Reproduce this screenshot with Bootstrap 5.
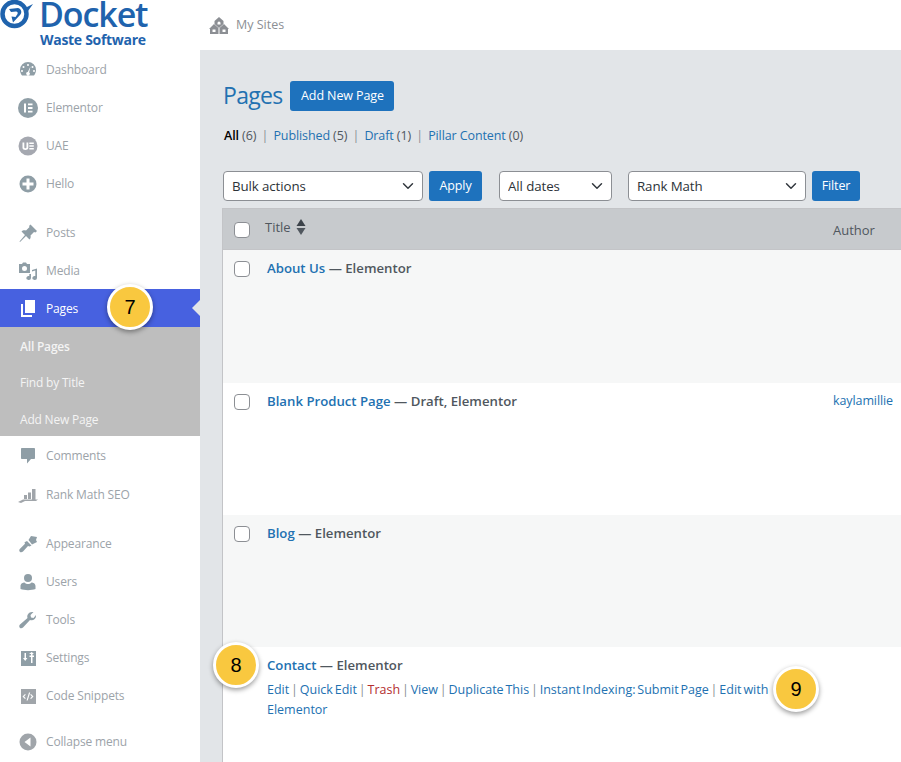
<!DOCTYPE html>
<html lang="en">
<head>
  <meta charset="UTF-8">
  <title>Pages</title>
  <link href="https://cdn.jsdelivr.net/npm/bootstrap@5.3.3/dist/css/bootstrap.min.css" rel="stylesheet">
  <style>
    html, body { height: 762px; overflow: hidden; }
    body { font-family: "Open Sans", "Noto Sans", sans-serif; font-size: 12.5px; background: #fff; color: #3c434a; }
    a { text-decoration: none; color: #2271b1; }
    .shell { width: 901px; height: 762px; position: relative; overflow: hidden; }
    .side { width: 200px; flex: none; }
    .brand { height: 51px; position: relative; overflow: hidden; }
    .brand svg { position: absolute; left: 0; top: 0; }
    .brand-a { position: absolute; left: 39px; top: 2px; font: 600 34px/24px "Open Sans", sans-serif; letter-spacing: -1.1px; color: #1f63ad; }
    .brand-b { position: absolute; left: 40px; top: 32px; font: 700 14px/16px "Open Sans", sans-serif; letter-spacing: -.3px; color: #1f63ad; }
    .side-item { display: flex; align-items: center; height: 38px; padding-left: 18px; color: #9ca3a9; font-size: 12px; letter-spacing: -.15px; }
    .side-item svg { width: 20px; height: 20px; flex: none; margin-right: 8px; }
    .side-gap { margin-top: 11px; }
    .side-gap-b { margin-top: 10px; }
    .side-now { background: #4761e0; color: #fff; position: relative; margin-top: -1px; padding-top: 1px; }
    .side-now svg { margin-top: -1px; }
    .side-now::after { content: ""; position: absolute; right: 0; top: 11px; border: 8px solid transparent; border-right-color: #e2e5e8; border-left-width: 0; }
    .side-sub { background: #bebebe; padding: 1.5px 0 0 20px; height: 109px; display: flex; flex-direction: column; margin-bottom: 1px; }
    .sub-link { color: #f4f4f4; height: 36.5px; flex: none; display: flex; align-items: center; font-size: 12px; letter-spacing: -.2px; }
    .sub-now { font-weight: 600; }
    .side-rank { height: 40px; }
    .side-end { margin-top: 8px; }
    .top { height: 50px; display: flex; align-items: center; padding-left: 9px; color: #8c8f94; font-size: 12.5px; }
    .top svg { margin-right: 7px; }
    .work { background: #e2e5e8; height: 712px; padding: 31px 0 0 22px; width: 701px; }
    .ttl { font-size: 23px; font-weight: 400; color: #2271b1; margin: -2px 8px 0 1px; line-height: 30px; letter-spacing: -.7px; }
    .act { background: #1e72bd; border: 0; color: #fff; height: 30px; border-radius: 3px; padding: 0; font-size: 12.5px; letter-spacing: -.1px; }
    .act-new { width: 104px; }
    .act-apply { width: 53px; }
    .act-filter { width: 48px; }
    .views { margin: 16px 0 0 2px; line-height: 18px; font-size: 12.5px; height: 18px; color: #50575e; letter-spacing: -.1px; }
    .views b { font-weight: 600; color: #000; }
    .views i { font-style: normal; color: #8a8f94; margin: 0 2px; }
    .tools { margin-top: 26px; margin-left: 1px; height: 30px; }
    .pick { height: 30px; font-size: 13.3px; padding: 1px 24px 0 8px; border: 1px solid #8c8f94; border-radius: 4px; color: #2c3338; background-color: #fff; background-position: right 6px center; letter-spacing: -.1px; }
    .pick-a { width: 200px; margin-right: 6px; }
    .pick-b { width: 113px; margin-left: 17px; margin-right: 16px; }
    .pick-c { width: 178px; margin-right: 6px; }
    .grid-wrap { margin-top: 7px; width: 760px; border-left: 1px solid #c3c4c7; background: #fff; }
    .rows { width: 760px; border-collapse: collapse; table-layout: fixed; }
    .rows th { background: #c7cacd; height: 41px; font-weight: 400; color: #50575e; font-size: 13px; border-top: 1px solid #c3c4c7; border-bottom: 1px solid #c3c4c7; vertical-align: middle; }
    .rows td { height: 132px; vertical-align: top; padding-top: 8px; }
    .rows tr.row-one td { height: 133px; }
    .rows tr.odd td { background: #f6f7f7; }
    .tick { width: 16px; height: 16px; border: 1px solid #8c8f94; border-radius: 4px; margin: 3px 0 0 10px; background: #fff; }
    .rows th .tick { margin-top: 1px; }
    .th-title { padding-left: 8px; }
    .th-title span { position: relative; top: -2px; }
    .th-author { padding: 3px 0 0 10px; }
    .col-t { color: #50575e; font-weight: 600; font-size: 13.2px; padding-left: 10px; line-height: 20px; }
    .col-t a { font-weight: 600; }
    .col-a { padding-left: 10px; font-size: 12.5px; letter-spacing: -.1px; line-height: 20px; }
    .acts { font-weight: 400; font-size: 12.5px; letter-spacing: 0; word-spacing: -1.4px; line-height: 20px; margin-top: 5px; width: 505px; color: #8a8f94; }
    .acts a { font-weight: 400; }
    .acts .del { color: #b32d2e; }
    .sorter { display: inline-block; vertical-align: -1px; margin-left: 2px; }
    .pin { position: absolute; width: 46px; height: 46px; border-radius: 50%; background: #f9c83f; border: 3px solid #fff; box-shadow: 0 2px 5px rgba(0,0,0,.4); display: flex; align-items: center; justify-content: center; font: 400 20px "Liberation Sans", sans-serif; color: #000; }
    .pin-7 { left: 107px; top: 284px; }
    .pin-8 { left: 213px; top: 642px; }
    .pin-9 { left: 773px; top: 666px; }
  </style>
</head>
<body>
<div class="shell d-flex">
  <div class="side">
    <div class="brand">
      <svg width="34" height="30" viewBox="0 0 34 30"><circle cx="14.500" cy="14" r="12" fill="none" stroke="#1f63ad" stroke-width="4.500"/><path d="M9 9l9-1c4 1 4 5 2 7l-7 7.500-1.500-6 4 .5 2-3c.5-1.500 0-2.500-1.500-2.500L11 12z" fill="#1f63ad"/><path d="M25 8l8-4-5 7z" fill="#1f63ad"/></svg>
      <div class="brand-a">Docket</div>
      <div class="brand-b">Waste Software</div>
    </div>
    <a class="side-item"><svg viewBox="0 0 20 20"><path d="M10 2a8 8 0 0 0-8 8c0 2 .7 3.800 2 5.500h12c1.300-1.700 2-3.500 2-5.500a8 8 0 0 0-8-8zm0 2a1 1 0 1 1 0 2 1 1 0 0 1 0-2zM5.500 6a1 1 0 1 1 0 2 1 1 0 0 1 0-2zm9 0a1 1 0 1 1 0 2 1 1 0 0 1 0-2zM4 10a1 1 0 1 1 0 2 1 1 0 0 1 0-2zm12 0a1 1 0 1 1 0 2 1 1 0 0 1 0-2zM12.500 6.500l-1.300 5.800a1.800 1.800 0 1 1-1.400-.4z" fill="#8f9ea6" fill-rule="evenodd"/></svg>Dashboard</a>
    <a class="side-item"><svg viewBox="0 0 20 20"><circle cx="10" cy="10" r="10" fill="#8f9ea6"/><path d="M6 5.500h2v9H6zM10 5.500h4.500v1.800H10zM10 9.100h4.500v1.800H10zM10 12.700h4.500v1.800H10z" fill="#fff"/></svg>Elementor</a>
    <a class="side-item"><svg viewBox="0 0 20 20"><circle cx="10" cy="10" r="9.500" fill="#a5a8b0"/><path d="M4.500 6.500h1.800v5c0 1 2.200 1 2.200 0v-5h1.800v5.500c0 2.500-5.800 2.500-5.800 0zM11.300 6.500h4.500v1.500h-4.500zM11.300 9.300h4.500v1.500h-4.500zM11.300 12h4.500v1.500h-4.500z" fill="#fff"/></svg>UAE</a>
    <a class="side-item"><svg viewBox="0 0 20 20"><circle cx="10" cy="10" r="8.500" fill="#8f9ea6"/><path d="M8.500 4.500h3v4h4v3h-4v4h-3v-4h-4v-3h4z" fill="#fff"/></svg>Hello</a>
    <a class="side-item side-gap"><svg viewBox="0 0 20 20"><path d="M12.500 1.500L19 8l-1.500 1.500L16 9l-3.500 3.500c.5 1.500 0 3-1 4L8 13l-6 6-.5-.5L7 12 3.500 8.500c1-1 2.500-1.500 4.500-1L11.500 4 11 3z" fill="#8f9ea6"/></svg>Posts</a>
    <a class="side-item"><svg viewBox="0 0 20 20"><path d="M1 3h3l1-1.500h3L9 3h3v9H1zm5.500 2a2.500 2.500 0 1 0 0 5 2.500 2.500 0 0 0 0-5z" fill="#8f9ea6" fill-rule="evenodd"/><path d="M14 9l5-1.500V17a2.300 2 0 1 1-1.700-2v-5.500l-3.300 1z" fill="#8f9ea6"/><path d="M12 13h1v4a2.300 2 0 1 1-1.700-2v-2z" fill="#8f9ea6"/></svg>Media</a>
    <a class="side-item side-now"><svg viewBox="0 0 20 20"><path d="M7 2h10v13H7z" fill="#fff"/><path d="M3 6h2v11h9v2H3z" fill="#fff"/></svg>Pages</a>
    <div class="side-sub">
      <a class="sub-link sub-now">All Pages</a>
      <a class="sub-link">Find by Title</a>
      <a class="sub-link">Add New Page</a>
    </div>
    <a class="side-item"><svg viewBox="0 0 20 20"><path d="M4 2h12c.7 0 1 .5 1 1v9c0 .8-.5 1-1 1h-3l-4 4.500V13H4c-.7 0-1-.5-1-1V3c0-.7.4-1 1-1z" fill="#8f9ea6"/></svg>Comments</a>
    <a class="side-item side-rank"><svg viewBox="0 0 20 20"><path d="M6 10h3v4H6zM10 7.500h3V14h-3zM14 4h3.500v10.500H14zM0 17l5-2.500h15L18 16H7l-4 2z" fill="#a0a5aa"/></svg>Rank Math SEO</a>
    <a class="side-item side-gap-b"><svg viewBox="0 0 20 20"><path d="M10.500 6L13 2l6 1-1 3 1 2-5 2.500z" fill="#8f9ea6"/><path d="M9 7l4.500 4.500-2 1-1.500-.5-5 5.500c-1 1-2.500 1-3.200.2s-.8-2 .2-3l5-5-.5-1.500z" fill="#8f9ea6"/></svg>Appearance</a>
    <a class="side-item"><svg viewBox="0 0 20 20"><circle cx="10" cy="6" r="4" fill="#8f9ea6"/><path d="M2.500 17v-3c0-2.500 2.500-3.500 4-3.500 1 1 2.300 1.500 3.500 1.500s2.500-.5 3.500-1.500c1.500 0 4 1 4 3.500v3c-4 1.500-11 1.500-15 0z" fill="#8f9ea6"/></svg>Users</a>
    <a class="side-item"><svg viewBox="0 0 20 20"><path d="M18 6c0 3-3 5-6 4l-7 7.500c-1 1-2.500 1-3.200.2s-.8-2.200.2-3.200L9.500 8C8.500 5 11 2 14 2h1.500l-3 3 .5 2.500 2.500.5 2.500-3z" fill="#8f9ea6"/></svg>Tools</a>
    <a class="side-item"><svg viewBox="0 0 20 20"><path fill-rule="evenodd" d="M3 3h15v15H3zM6.500 5v5H5l2.200 3 2.200-3H8V5zM13 6H11l2.700-2 2.300 2h-1.500v1.500H16V9h-1.500v6H13V9h-1.500V7.500H13z" fill="#8f9ea6"/></svg>Settings</a>
    <a class="side-item"><svg viewBox="0 0 20 20"><path fill-rule="evenodd" d="M3 3h15v15H3zM7 8l-2.500 2.500L7 13l.8-.8-1.700-1.700 1.700-1.700zM11 6.500l-2.500 8h1.200l2.500-8zM13 8l-.8.800 1.700 1.700-1.700 1.700.8.800 2.500-2.500z" fill="#a0a5aa"/></svg>Code Snippets</a>
    <a class="side-item side-end"><svg viewBox="0 0 20 20"><circle cx="10" cy="10" r="8.500" fill="#a0a5aa"/><path d="M12.500 5.500v9L6.500 10z" fill="#fff"/></svg>Collapse menu</a>
  </div>
  <div class="flex-grow-1">
    <div class="top">
      <svg width="20" height="17" viewBox="0 0 20 17"><path fill-rule="evenodd" d="M10 0l4.500 4v3L10 11 5.500 7V4zM10 4.500a1.500 1.500 0 0 0-1.500 1.500v1.500h3V6A1.500 1.500 0 0 0 10 4.500z" fill="#8c8f94"/><path fill-rule="evenodd" d="M5 7l4.500 4v6H1v-5H0zM3.500 12.500V15h3v-2.500zM15 7l5 5h-1v5h-8.500v-6zM13.500 12.500V15h3v-2.500z" fill="#8c8f94"/></svg>
      My Sites
    </div>
    <div class="work">
      <div class="d-flex align-items-center">
        <h1 class="ttl">Pages</h1>
        <button class="btn act act-new">Add New Page</button>
      </div>
      <div class="views"><b>All</b> (6) <i>|</i> <a href="#">Published</a> (5) <i>|</i> <a href="#">Draft</a> (1) <i>|</i> <a href="#">Pillar Content</a> (0)</div>
      <div class="tools d-flex">
        <select class="form-select pick pick-a"><option>Bulk actions</option></select>
        <button class="btn act act-apply">Apply</button>
        <select class="form-select pick pick-b"><option>All dates</option></select>
        <select class="form-select pick pick-c"><option>Rank Math</option></select>
        <button class="btn act act-filter">Filter</button>
      </div>
      <div class="grid-wrap">
        <table class="rows">
          <colgroup><col style="width:34px"><col style="width:566px"><col></colgroup>
          <tr>
            <th><div class="tick"></div></th>
            <th class="th-title"><span>Title</span> <svg class="sorter" width="10" height="16" viewBox="0 0 10 16"><path d="M5 0l4.500 7h-9z" fill="#3c434a"/><path d="M.5 9h9L5 16z" fill="#50575e"/></svg></th>
            <th class="th-author">Author</th>
          </tr>
          <tr class="odd row-one">
            <td><div class="tick"></div></td>
            <td class="col-t"><a href="#">About Us</a> — Elementor</td>
            <td></td>
          </tr>
          <tr>
            <td><div class="tick"></div></td>
            <td class="col-t"><a href="#">Blank Product Page</a> — Draft, Elementor</td>
            <td class="col-a"><a href="#">kaylamillie</a></td>
          </tr>
          <tr class="odd">
            <td><div class="tick"></div></td>
            <td class="col-t"><a href="#">Blog</a> — Elementor</td>
            <td></td>
          </tr>
          <tr>
            <td></td>
            <td class="col-t"><a href="#">Contact</a> — Elementor
              <div class="acts"><a href="#">Edit</a> | <a href="#">Quick Edit</a> | <a href="#" class="del">Trash</a> | <a href="#">View</a> | <a href="#">Duplicate This</a> | <a href="#">Instant Indexing: Submit Page</a> | <a href="#">Edit with</a> <a href="#">Elementor</a></div>
            </td>
            <td></td>
          </tr>
        </table>
      </div>
    </div>
  </div>
  <div class="pin pin-7">7</div>
  <div class="pin pin-8">8</div>
  <div class="pin pin-9">9</div>
</div>
<script src="https://cdn.jsdelivr.net/npm/bootstrap@5.3.3/dist/js/bootstrap.bundle.min.js"></script>
</body>
</html>
